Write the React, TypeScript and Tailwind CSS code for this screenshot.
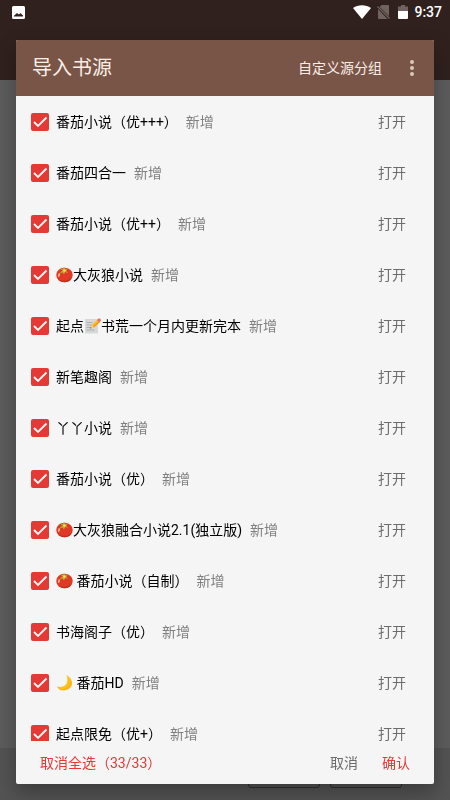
import type { ReactElement } from "react";
import { useState } from "react";

type EmojiName = "tomato" | "memo" | "moon";

interface Source {
  id: number;
  icon?: EmojiName;
  before?: string;
  name: string;
}

const TOTAL = 33;

const sources: Source[] = [
  { id: 1, name: "番茄小说（优+++）" },
  { id: 2, name: "番茄四合一" },
  { id: 3, name: "番茄小说（优++）" },
  { id: 4, icon: "tomato", name: "大灰狼小说" },
  { id: 5, before: "起点", icon: "memo", name: "书荒一个月内更新完本" },
  { id: 6, name: "新笔趣阁" },
  { id: 7, name: "丫丫小说" },
  { id: 8, name: "番茄小说（优）" },
  { id: 9, icon: "tomato", name: "大灰狼融合小说2.1(独立版)" },
  { id: 10, icon: "tomato", name: " 番茄小说（自制）" },
  { id: 11, name: "书海阁子（优）" },
  { id: 12, icon: "moon", name: " 番茄HD" },
  { id: 13, name: "起点限免（优+）" },
];

function Emoji({ name }: { name: EmojiName }): ReactElement {
  return (
    <svg viewBox="0 0 34 34" className="size-[17px] shrink-0" aria-hidden="true">
      {name === "tomato" && (
        <>
          <ellipse cx="17" cy="18" rx="16.500" ry="14.500" fill="#df3a25" />
          <path d="M3 25c6 5 20 8 28-2-4 13-22 12-28 2z" fill="#c22f20" />
          <ellipse cx="6" cy="18" rx="2" ry="4" fill="#f7a894" transform="rotate(15 6 18)" />
          <path d="M14 10 8 5l6 1 2-4 2 4 6-1-4 4 4 5-6-2-2 5-3-4-6 2 4-5z" fill="#b7a830" />
          <path d="m14 9 2-4 2 3 4 0-4 2-1 3-2-2z" fill="#f0dc63" />
        </>
      )}
      {name === "memo" && (
        <>
          <path d="M2 4h26v29H2z" fill="#d6d8d9" />
          <path d="M5 11h12M5 16h10M5 21h7M5 26h16" stroke="#a7adb0" strokeWidth="1.800" />
          <path d="m12 23 3-7L27 5l5 5-12 11z" fill="#fbc02d" />
          <path d="m17.500 18.500 12-11L32 10 20 21z" fill="#eda21c" />
          <path d="m26 6 3-3c2-1.500 6 2 4.500 4.500L31 11z" fill="#e8736a" />
          <path d="m12 23 3-7 5 5z" fill="#f0c99a" />
          <path d="m12 23 1-3 2 2z" fill="#444" />
        </>
      )}
      {name === "moon" && (
        <>
          <path d="M21 2c17 9 14 29-4 31C9 34 4 30 2 25c12 4 26-4 19-23z" fill="#fcc21b" />
          <path d="M24 6c11 15-5 29-20 22 9 8 24 4 27-7 1-6-2-11-7-15z" fill="#f2a91c" opacity=".45" />
        </>
      )}
    </svg>
  );
}

function StatusBar(): ReactElement {
  return (
    <div className="flex h-6 items-center justify-between pr-2 pl-3 text-white">
      <svg viewBox="0 0 13 13" className="size-[13px]" aria-hidden="true">
        <path
          fillRule="evenodd"
          fill="currentColor"
          d="M1.5 0h10A1.5 1.5 0 0 1 13 1.5v10a1.5 1.5 0 0 1-1.5 1.5h-10A1.5 1.5 0 0 1 0 11.500v-10A1.500 1.500 0 0 1 1.500 0zM2 10.500h9V9.500L8.500 7 7 8.500 5 7 2 9.800z"
        />
      </svg>
      <div className="flex items-center gap-[6px]">
        <svg viewBox="0 0 18 14" className="h-[14px] w-[18px]" aria-hidden="true">
          <path d="M0 3C5-.8 13-.8 18 3L9 14z" fill="currentColor" />
        </svg>
        <svg viewBox="0 0 13 14" className="h-[14px] w-[13px]" aria-hidden="true">
          <path d="M4.500 0H11a1 1 0 0 1 1 1v10.300L2.700 2zM1 4l9.500 10H2a1 1 0 0 1-1-1z" fill="#70635f" />
          <path d="m.5 1.500 12 12" stroke="#70635f" strokeWidth="1.200" />
        </svg>
        <svg viewBox="0 0 10 14" className="ml-[2px] h-[14px] w-[10px]" aria-hidden="true">
          <path d="M3 0h4v1.500h3V6H0V1.500h3z" fill="#70635f" />
          <path d="M0 6h10v7a1 1 0 0 1-1 1H1a1 1 0 0 1-1-1z" fill="currentColor" />
        </svg>
        <span className="text-[14px] leading-6 font-medium">9:37</span>
      </div>
    </div>
  );
}

interface RowProps {
  source: Source;
  checked: boolean;
  onToggle: () => void;
}

function SourceRow({ source, checked, onToggle }: RowProps): ReactElement {
  return (
    <li className="flex h-[51px] items-center justify-between pr-7 pl-[15px]">
      <div className="flex items-center gap-2">
        <label className="flex items-center gap-[7px] text-black">
          <span className="grid size-[18px] shrink-0">
            <input
              type="checkbox"
              checked={checked}
              onChange={onToggle}
              className="col-start-1 row-start-1 size-[18px] appearance-none rounded-[2px] border-2 border-[#757575] checked:border-[#e53935] checked:bg-[#e53935]"
            />
            {checked && (
              <svg viewBox="0 0 18 18" className="pointer-events-none col-start-1 row-start-1" aria-hidden="true">
                <path d="m3 9 4 4 8.500-8.500" fill="none" stroke="#f5f5f5" strokeWidth="1.900" />
              </svg>
            )}
          </span>
          <span className="flex items-center whitespace-pre">
            {source.before}
            {source.icon && <Emoji name={source.icon} />}
            {source.name}
          </span>
        </label>
        <span className="text-[#808080]">新增</span>
      </div>
      <button type="button" className="text-[#6c6c6c]">打开</button>
    </li>
  );
}

export default function App(): ReactElement {
  const [unchecked, setUnchecked] = useState<number[]>([]);

  const toggle = (id: number) =>
    setUnchecked((prev) => (prev.includes(id) ? prev.filter((x) => x !== id) : [...prev, id]));

  return (
    <div className="flex h-screen flex-col bg-[#5c5c5c] font-['Roboto','Noto_Sans_CJK_SC',sans-serif] text-[14px] leading-5">
      <header className="h-20 shrink-0 bg-[#30211e]">
        <StatusBar />
      </header>
      <div className="flex-1" />
      <div className="flex h-[52px] shrink-0 items-start justify-end gap-[10px] bg-[#535353] pr-12">
        <div className="h-10 w-[72px] rounded-[3px] border border-[#303030]" />
        <div className="h-10 w-[72px] rounded-[3px] border border-[#303030]" />
      </div>

      <div className="fixed inset-0 flex px-4 pt-10 pb-4">
        <section
          role="dialog"
          aria-labelledby="dialog-title"
          className="flex min-w-0 flex-1 flex-col overflow-hidden rounded-[2px] bg-[#f5f5f5] shadow-[0_8px_20px_rgba(0,0,0,0.3)]"
        >
          <div className="flex h-14 shrink-0 items-center justify-between bg-[#795548] px-4 text-[#fbeee6]">
            <h1 id="dialog-title" className="text-[20px] leading-8">导入书源</h1>
            <div className="flex items-center gap-6">
              <button type="button">自定义源分组</button>
              <button type="button" aria-label="更多" className="text-[#d8cabb]">
                <svg viewBox="0 0 12 18" className="h-[18px] w-3" fill="currentColor" aria-hidden="true">
                  <circle cx="6" cy="3" r="2" />
                  <circle cx="6" cy="9" r="2" />
                  <circle cx="6" cy="15" r="2" />
                </svg>
              </button>
            </div>
          </div>

          <ul className="min-h-0 flex-1 overflow-y-auto [scrollbar-width:none]">
            {sources.map((s) => (
              <SourceRow
                key={s.id}
                source={s}
                checked={!unchecked.includes(s.id)}
                onToggle={() => toggle(s.id)}
              />
            ))}
          </ul>

          <div className="flex h-[43px] shrink-0 items-center justify-between px-6 text-[#e53935]">
            <button type="button" onClick={() => setUnchecked([])}>
              取消全选（{TOTAL - unchecked.length}/{TOTAL}）
            </button>
            <div className="flex gap-6">
              <button type="button" className="text-[#6c6c6c]">取消</button>
              <button type="button">确认</button>
            </div>
          </div>
        </section>
      </div>
    </div>
  );
}
